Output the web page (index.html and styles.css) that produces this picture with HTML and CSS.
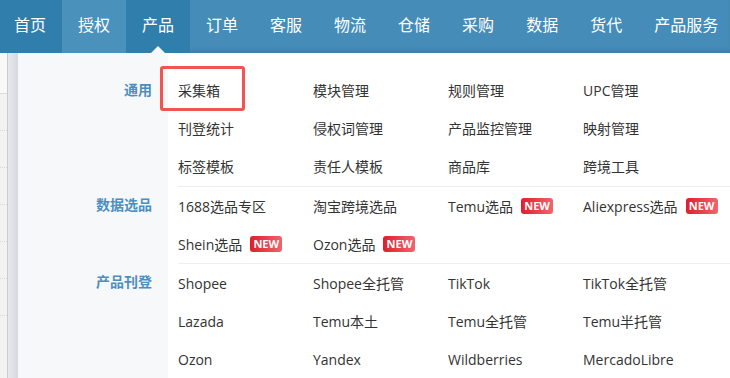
FILE: index.html
```html
<!DOCTYPE html>
<html lang="zh-CN">
<head>
    <meta charset="UTF-8">
    <meta name="viewport" content="width=device-width, initial-scale=1.0">
    <title>产品菜单</title>
    <link rel="stylesheet" href="styles.css">
</head>
<body>
    <div class="topbar">
        <a class="nav-item home">首页</a>
        <a class="nav-item hover">授权</a>
        <a class="nav-item active">产品</a>
        <a class="nav-item">订单</a>
        <a class="nav-item">客服</a>
        <a class="nav-item">物流</a>
        <a class="nav-item">仓储</a>
        <a class="nav-item">采购</a>
        <a class="nav-item">数据</a>
        <a class="nav-item">货代</a>
        <a class="nav-item">产品服务</a>
    </div>

    <div class="page">
        <!-- table behind the menu, only its edge shows -->
        <div class="side-table">
            <div class="row head"></div>
            <div class="row"></div>
            <div class="row"></div>
            <div class="row"></div>
            <div class="row"></div>
            <div class="row"></div>
            <div class="row"></div>
        </div>

        <div class="dropdown">
            <section class="group first">
                <div class="group-title">通用</div>
                <div class="group-links">
                    <a class="link marked">采集箱</a>
                    <a class="link">模块管理</a>
                    <a class="link">规则管理</a>
                    <a class="link">UPC管理</a>
                    <a class="link">刊登统计</a>
                    <a class="link">侵权词管理</a>
                    <a class="link">产品监控管理</a>
                    <a class="link">映射管理</a>
                    <a class="link">标签模板</a>
                    <a class="link">责任人模板</a>
                    <a class="link">商品库</a>
                    <a class="link">跨境工具</a>
                </div>
            </section>

            <section class="group">
                <div class="group-title">数据选品</div>
                <div class="group-links">
                    <a class="link">1688选品专区</a>
                    <a class="link">淘宝跨境选品</a>
                    <a class="link">Temu选品<span class="badge">NEW</span></a>
                    <a class="link">Aliexpress选品<span class="badge">NEW</span></a>
                    <a class="link">Shein选品<span class="badge">NEW</span></a>
                    <a class="link">Ozon选品<span class="badge">NEW</span></a>
                </div>
            </section>

            <section class="group">
                <div class="group-title">产品刊登</div>
                <div class="group-links">
                    <a class="link">Shopee</a>
                    <a class="link">Shopee全托管</a>
                    <a class="link">TikTok</a>
                    <a class="link">TikTok全托管</a>
                    <a class="link">Lazada</a>
                    <a class="link">Temu本土</a>
                    <a class="link">Temu全托管</a>
                    <a class="link">Temu半托管</a>
                    <a class="link">Ozon</a>
                    <a class="link">Yandex</a>
                    <a class="link">Wildberries</a>
                    <a class="link">MercadoLibre</a>
                </div>
            </section>
        </div>
    </div>
</body>
</html>
```

FILE: styles.css
```css
body {
    margin: 0;
    font-family: "Open Sans", "Noto Sans CJK SC", sans-serif;
    background-color: #fff;
    overflow: hidden;
    height: 378px;
}

.topbar {
    display: flex;
    height: 53px;
    background-color: #458db8;
    box-shadow: inset 0 -5px 5px -3px rgba(40, 70, 90, 0.25);
}

.nav-item {
    position: relative;
    flex-shrink: 0;
    padding: 0 16px;
    line-height: 50px;
    font-size: 16px;
    color: #fff;
    white-space: nowrap;
    cursor: pointer;
}

.nav-item.home {
    padding-left: 14px;
    background-color: #2f7eab;
}

.nav-item.hover {
    background-color: #4a91bc;
}

.nav-item.active {
    background-color: #2f7eab;
}

.nav-item.active::after {
    content: "";
    position: absolute;
    left: 25px;
    bottom: 0;
    border-left: 7px solid transparent;
    border-right: 7px solid transparent;
    border-bottom: 7px solid #f7f8fa;
}

.page {
    position: relative;
    height: 325px;
}

.side-table {
    width: 7px;
    height: 100%;
    background-color: #f3f3f3;
    border-right: 1px solid #cbcbcb;
}

.side-table .row {
    height: 36px;
    border-bottom: 1px dotted #d8d8d8;
}

.side-table .row.head {
    height: 40px;
    background-color: #f9f9f9;
    border-bottom: 1px solid #dcdcdc;
}

.dropdown {
    position: absolute;
    top: 0;
    left: 18px;
    right: 0;
    bottom: 0;
    padding-top: 18px;
    background: linear-gradient(to right, #f7f8fa 150px, #fff 150px);
}

.dropdown::before {
    content: "";
    position: absolute;
    top: 0;
    bottom: 0;
    left: -10px;
    width: 10px;
    background: linear-gradient(to right, #e6e8ec, #d6d9de);
}

.group {
    display: grid;
    grid-template-columns: 150px 1fr;
}

.group-title {
    padding-right: 16px;
    text-align: right;
    line-height: 38px;
    font-size: 14px;
    font-weight: bold;
    color: #4b8fc2;
}

.group-links {
    display: grid;
    grid-template-columns: repeat(4, 135px);
    margin-left: 10px;
    border-top: 1px solid #eeeeee;
}

.group.first .group-links {
    border-top: none;
    padding-bottom: 1px;
}

.link {
    position: relative;
    display: flex;
    align-items: center;
    height: 38px;
    font-size: 14px;
    color: #333;
    cursor: pointer;
}

.link.marked::after {
    content: "";
    position: absolute;
    left: -18px;
    top: -5px;
    width: 85px;
    height: 45px;
    border: 3px solid #f25353;
    border-radius: 3px;
    box-sizing: border-box;
}

.badge {
    margin-left: 8px;
    width: 32px;
    height: 16px;
    line-height: 16px;
    text-align: center;
    font-size: 11px;
    font-weight: bold;
    color: #fff;
    border-radius: 3px;
    background: linear-gradient(to right, #de1f2a, #f0646e);
}
```
